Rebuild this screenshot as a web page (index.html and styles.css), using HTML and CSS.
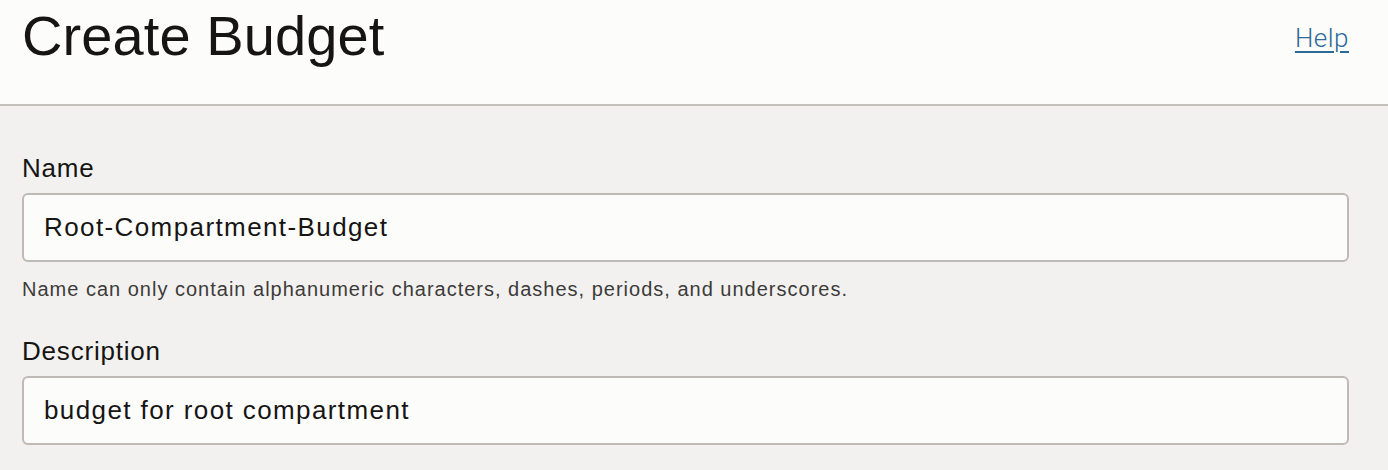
FILE: index.html
```html
<!DOCTYPE html>
<html lang="en">
<head>
<meta charset="utf-8">
<title>Create Budget</title>
<link rel="stylesheet" href="styles.css">
</head>
<body>
<header class="page-header">
  <h1 class="page-title">Create Budget</h1>
  <a class="help-link" href="#">Help</a>
</header>
<main class="form-body">
  <div class="field">
    <label class="field-label" for="name">Name</label>
    <div class="text-input" id="name">Root-Compartment-Budget</div>
    <p class="field-hint">Name can only contain alphanumeric characters, dashes, periods, and underscores.</p>
  </div>
  <div class="field">
    <label class="field-label" for="desc">Description</label>
    <div class="text-input" id="desc">budget for root compartment</div>
  </div>
</main>
</body>
</html>
```

FILE: styles.css
```css
html, body {
  margin: 0;
  padding: 0;
}
body {
  background: #f2f1f0;
  font-family: "Liberation Sans", Arial, sans-serif;
  color: #161513;
  height: 470px;
  overflow: hidden;
}
.page-header {
  background: #fcfcfb;
  border-bottom: 2px solid #c3bfba;
  height: 106px;
  box-sizing: border-box;
  display: flex;
  justify-content: space-between;
  align-items: flex-start;
  padding: 0 39px 0 22px;
}
.page-title {
  margin: 0;
  font-size: 56px;
  font-weight: 400;
  line-height: 1;
  padding-top: 8px;
  letter-spacing: 0.1px;
}
.help-link {
  font-family: "Roboto", "Liberation Sans", sans-serif;
  font-weight: 300;
  font-size: 26px;
  color: #2c6a98;
  text-decoration: underline;
  text-decoration-thickness: 2px;
  text-underline-offset: 4px;
  margin-top: 23px;
  letter-spacing: 0.5px;
}
.form-body {
  padding: 47px 39px 0 22px;
}
.field-label {
  display: block;
  font-size: 26px;
  line-height: 30px;
  letter-spacing: 0.8px;
  color: #161513;
}
.text-input {
  margin-top: 10px;
  height: 69px;
  box-sizing: border-box;
  border: 2px solid #bfbab5;
  border-radius: 6px;
  background: #fcfcfb;
  padding: 0 20px;
  display: flex;
  align-items: center;
  font-size: 26px;
  letter-spacing: 1.4px;
  color: #161513;
}
.field-hint {
  margin: 16px 0 0;
  font-size: 20px;
  line-height: 22px;
  letter-spacing: 1px;
  color: #3d3b39;
}
.field + .field {
  margin-top: 36px;
}
```
